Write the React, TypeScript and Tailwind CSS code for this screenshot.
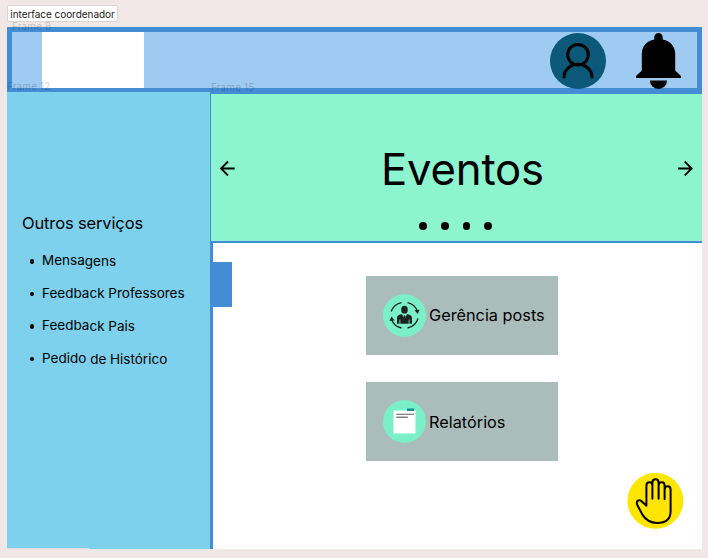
import React from "react";

const services: [string, string][] = [
  ["Mensa", "gens"],
  ["Feedba", "ck Professores"],
  ["Feedba", "ck Pais"],
  ["Pedido ", "de Histórico"],
];

function UserIcon() {
  return (
    <svg width="56" height="56" viewBox="0 0 56 56" className="shrink-0">
      <circle cx="28" cy="28" r="28" fill="#0b5878" />
      <g fill="none" stroke="#000" strokeWidth="3">
        <circle cx="28" cy="21.700" r="10.300" />
        <path d="M14 45.300v-1a14 13 0 0 1 28 0v1" />
      </g>
    </svg>
  );
}

function BellIcon() {
  return (
    <svg width="45" height="56" viewBox="0 0 45 56" className="shrink-0">
      <path d="M22.500 0a4.200 4.200 0 0 0-4.200 4.200V6.500C10.500 8 5.800 13.500 5.800 21v16.500L0 43v2h45v-2l-5.800-5.500V21c0-7.500-4.700-13-12.500-14.500V4.200A4.200 4.200 0 0 0 22.500 0Z" />
      <path d="M14 47.500h17a8.500 8.500 0 0 1-17 0Z" />
    </svg>
  );
}

function Arrow({ right }: { right?: boolean }) {
  return (
    <svg width="16" height="16" viewBox="0 0 16 16" fill="none" stroke="#000" strokeWidth="1.800">
      {right ? (
        <path d="M1 8.500h13.500M7.700 1.500l7 7-7 7" />
      ) : (
        <path d="M15.700 8.500H2.200M9 1.500l-7 7 7 7" />
      )}
    </svg>
  );
}

function ManageIcon() {
  return (
    <svg width="43" height="43" viewBox="0 0 43 43" className="shrink-0">
      <circle cx="21.500" cy="21.500" r="21.500" fill="#7aefc8" />
      <g fill="none" stroke="#1c2421" strokeWidth="1.300">
        <path d="M8.200 17.500A14 14 0 0 1 18.500 8.700M24.500 8.700A14 14 0 0 1 34.500 17M35 24.500A14 14 0 0 1 24.500 34M18.500 34A14 14 0 0 1 8.500 25.500" />
      </g>
      <g fill="#1c2421">
        <path d="m31.500 16.300 5-.5-1.700 4.200ZM6.500 27l2-4.500 3 4Z" />
        <ellipse cx="21.500" cy="15.700" rx="3.300" ry="3.900" />
        <path d="M14 29.700v-5.400c0-2.500 1.500-3.300 4.700-4.200l2.800 4 2.800-4c3.200.9 4.700 1.700 4.700 4.200v5.400h-2.500V25.500h-.8v4.200h-8.400v-4.200h-.8v4.200Z" />
      </g>
      <path d="m19.400 20.300 2.100 5 2.100-5-2.100 1Z" fill="#7aefc8" />
      <path d="m21.500 21 1 1.300-1 4-1-4Z" fill="#1c2421" />
    </svg>
  );
}

function ReportIcon() {
  return (
    <svg width="43" height="43" viewBox="0 0 43 43" className="shrink-0">
      <circle cx="21.500" cy="21.500" r="21.500" fill="#7aefc8" />
      <path d="M10.500 10.500h22v23h-22Z" fill="#fff" />
      <path d="M24 8.500h7v2.500h-7Z" fill="#148b95" />
      <path d="M13.300 14.300h17.500" stroke="#777" strokeWidth="1.200" />
      <path d="M13.300 17.200h11.500" stroke="#444" strokeWidth="1" />
    </svg>
  );
}

function HandIcon() {
  return (
    <svg width="57" height="56" viewBox="0 0 57 56" fill="none" className="absolute left-[627px] top-[473px]">
      <circle cx="28.400" cy="27.800" r="28" fill="#ffe500" />
      <g transform="translate(.4 .7)" stroke="#000" strokeWidth="2" strokeLinecap="round" strokeLinejoin="round">
        <path d="M19 32V12c0-4.600 6-4.600 6 0V25M25 12V9c0-4.600 6.200-4.600 6.200 0V25M31.200 12c0-4.600 6-4.600 6 0V25.500M37.200 16c0-4.500 6-4.500 6 0v21.500c0 8.500-5.500 11.700-13.500 11.700-7 0-11.700-3.500-14.700-8.300L10 31.500c-2-5 2.200-6.500 5-3.200L19 32" />
      </g>
    </svg>
  );
}

function Card({ icon, label }: { icon: React.ReactNode; label: string }) {
  return (
    <div className="flex h-[79px] w-[192.500px] items-center gap-[3px] bg-[#aabdba] pl-[17px]">
      {icon}
      <span className="whitespace-nowrap pl-[0.500px] text-[16.300px] leading-5">{label}</span>
    </div>
  );
}

export default function App() {
  return (
    <div className="relative flex h-[558px] w-[708px] flex-col overflow-hidden bg-[#f1e7e6] pl-[7px] font-['Inter',sans-serif] text-black">
      <div className="mt-[5px] flex h-[17px] w-[111px] shrink-0 items-center justify-center whitespace-nowrap rounded-[2px] border border-[#d9d6d6] bg-white text-[10px] leading-none tracking-[-0.050px] text-[#222]">
        interface coordenador
      </div>

      <div className="mt-[5px] flex h-[522px] w-[695px] shrink-0 flex-col bg-white">
        <header className="flex h-[67px] shrink-0 items-start border-[5px] border-b-[6px] border-[#428dd3] bg-[#9fcaf1] pl-[30px]">
          <div className="h-[56px] w-[102px] bg-white" />
          <div className="ml-auto mr-[16px] flex gap-[30px] pt-[0.500px]">
            <UserIcon />
            <BellIcon />
          </div>
        </header>

        <div className="flex min-h-0 flex-1">
          <aside className="-mt-[2px] w-[203px] shrink-0 bg-[#7dd1ec] pl-[15px] pt-[119px]">
            <h2 className="whitespace-nowrap text-[16.500px] leading-6 tracking-[-0.140px]">Outros serviços</h2>
            <ul className="mt-[9.500px]">
              {services.map(([start, end]) => (
                <li key={start + end} className="flex h-[32.600px] items-center whitespace-pre text-[13.500px] leading-none">
                  <span className="ml-[7.500px] mr-[8px] mt-[1px] size-[4.500px] rounded-full bg-black" />
                  <span>{start}</span>
                  <span className="mt-[1.500px]">{end}</span>
                </li>
              ))}
            </ul>
          </aside>

          <main className="flex flex-1 flex-col">
            <section className="flex h-[149px] shrink-0 items-start border-b-[2px] border-l border-[#428dd3] bg-[#8df4d0]">
              <div className="ml-[8px] mt-[66px]"><Arrow /></div>
              <div className="flex flex-1 flex-col items-center pl-[13px]">
                <h1 className="mt-[50px] text-[43.700px] leading-[52px] tracking-[-0.200px]">Eventos</h1>
                <div className="mr-[14px] mt-[26px] flex gap-[14px]">
                  {[0, 1, 2, 3].map((dot) => (
                    <span key={dot} className="size-[7.700px] rounded-full bg-black" />
                  ))}
                </div>
              </div>
              <div className="mr-[9px] mt-[66px]"><Arrow right /></div>
            </section>
            <section className="flex flex-1 border-l-[3px] border-[#428dd3]">
              <div className="mt-[19px] h-[45px] w-[19px] bg-[#428dd3]" />
              <div className="ml-[133.500px] mt-[32.500px] flex flex-col gap-[27.500px]">
                <Card icon={<ManageIcon />} label="Gerência posts" />
                <Card icon={<ReportIcon />} label="Relatórios" />
              </div>
            </section>
          </main>
        </div>
      </div>

      <span className="absolute left-[12px] top-[20px] text-[10px] leading-3 tracking-[0.100px] text-black/20">Frame 8</span>
      <span className="absolute left-[7px] top-[80px] text-[10px] leading-3 tracking-[0.100px] text-black/20">Frame 12</span>
      <span className="absolute left-[211px] top-[81px] text-[10px] leading-3 tracking-[0.100px] text-black/20">Frame 15</span>
      <div className="absolute left-[7px] top-[548px] h-px w-[82px] bg-[#dedde2]" />
      <HandIcon />
    </div>
  );
}
